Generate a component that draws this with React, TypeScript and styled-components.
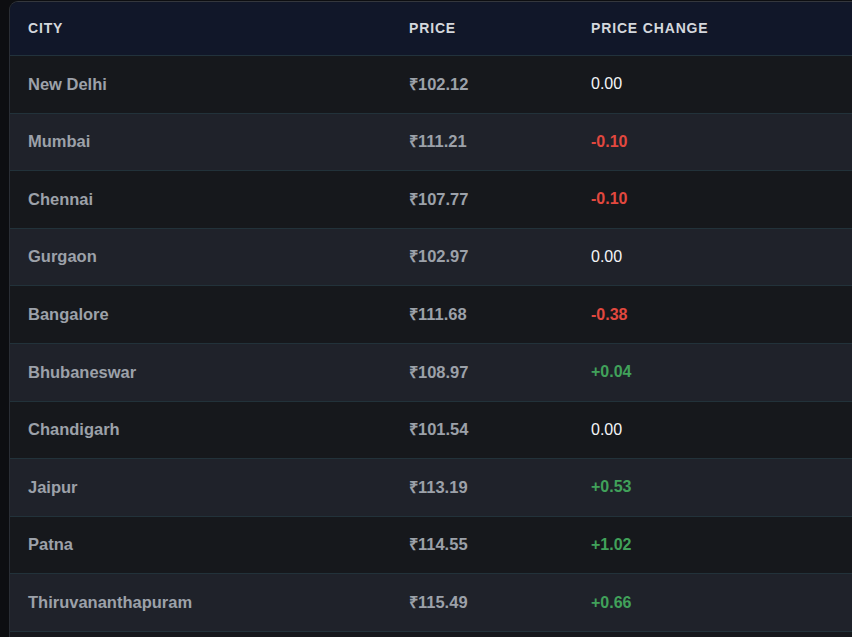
import React from "react";
import styled, { createGlobalStyle } from "styled-components";

const Global = createGlobalStyle`
  html, body {
    margin: 0;
    padding: 0;
    background: #0d0e11;
    overflow: hidden;
  }
  body {
    font-family: "Liberation Sans", Arial, Helvetica, sans-serif;
  }
`;

const Page = styled.div`
  padding: 1px 0 0 9px;
  height: 636px;
  overflow: hidden;
`;

const Table = styled.div`
  width: 900px;
  min-height: 640px;
  border-top: 1px solid #34373d;
  border-left: 1px solid #2a2e35;
  border-top-left-radius: 9px;
  overflow: hidden;
  background: #16181c;
`;

const Grid = styled.div`
  display: grid;
  grid-template-columns: 381px 182px 1fr;
  align-items: center;
`;

const HeaderRow = styled(Grid)`
  height: 53px;
  background: #111729;
  border-bottom: 1px solid #22323c;
`;

const HeaderCell = styled.div`
  padding: 0 18px 2px;
  font-size: 14px;
  font-weight: 700;
  letter-spacing: 0.85px;
  text-transform: uppercase;
  color: #d4d7dd;
  line-height: 1;
`;

const Row = styled(Grid)<{ $alt: boolean }>`
  height: 57.6px;
  box-sizing: border-box;
  background: ${(p) => (p.$alt ? "#1f222a" : "#16181c")};
  border-bottom: 1px solid #22323a;
`;

const Cell = styled.div`
  padding: 0 18px 1px;
  font-size: 16.5px;
  font-weight: 700;
  color: #9ca1a9;
  line-height: 1;
`;

const ChangeCell = styled.div<{ $tone: "zero" | "up" | "down" }>`
  padding: 0 18px;
  font-size: 16px;
  line-height: 1;
  font-weight: ${(p) => (p.$tone === "zero" ? 400 : 700)};
  color: ${(p) =>
    p.$tone === "zero" ? "#f4f5f7" : p.$tone === "up" ? "#41a15a" : "#e2483f"};
`;

const data: [string, string, string][] = [
  ["New Delhi", "₹102.12", "0.00"],
  ["Mumbai", "₹111.21", "-0.10"],
  ["Chennai", "₹107.77", "-0.10"],
  ["Gurgaon", "₹102.97", "0.00"],
  ["Bangalore", "₹111.68", "-0.38"],
  ["Bhubaneswar", "₹108.97", "+0.04"],
  ["Chandigarh", "₹101.54", "0.00"],
  ["Jaipur", "₹113.19", "+0.53"],
  ["Patna", "₹114.55", "+1.02"],
  ["Thiruvananthapuram", "₹115.49", "+0.66"],
];

const tone = (v: string): "zero" | "up" | "down" =>
  v.startsWith("+") ? "up" : v.startsWith("-") ? "down" : "zero";

export default function App() {
  return (
    <>
      <Global />
      <Page>
        <Table>
          <HeaderRow>
            <HeaderCell>City</HeaderCell>
            <HeaderCell>Price</HeaderCell>
            <HeaderCell>Price Change</HeaderCell>
          </HeaderRow>
          {data.map(([city, price, change], i) => (
            <Row key={city} $alt={i % 2 === 1}>
              <Cell>{city}</Cell>
              <Cell>{price}</Cell>
              <ChangeCell $tone={tone(change)}>{change}</ChangeCell>
            </Row>
          ))}
        </Table>
      </Page>
    </>
  );
}
